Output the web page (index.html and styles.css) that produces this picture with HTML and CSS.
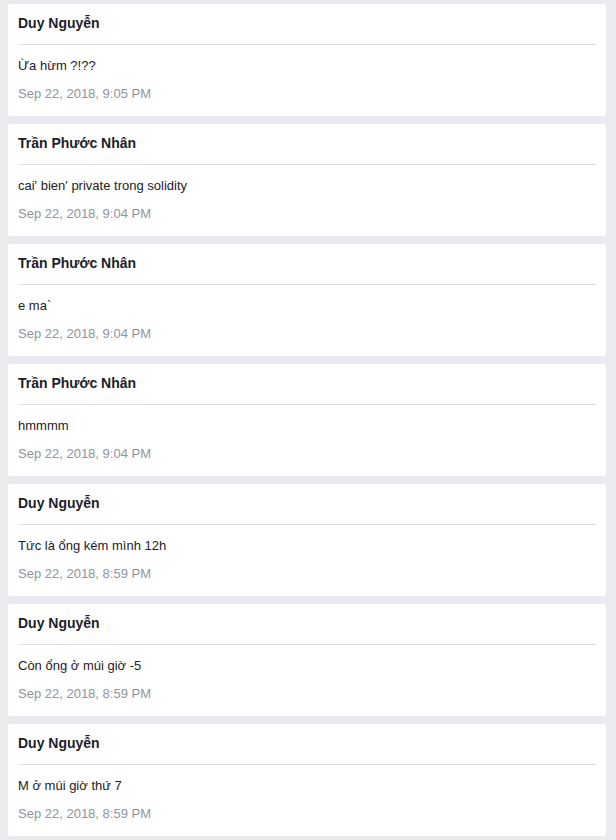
FILE: index.html
```html
<!DOCTYPE html>
<html>
<head>
<meta charset="utf-8">
<link rel="stylesheet" href="styles.css">
</head>
<body>
<div class="list">
  <div class="card">
    <div class="name">Duy Nguyễn</div>
    <div class="body">
      <div class="msg">Ừa hừm ?!??</div>
      <div class="date">Sep 22, 2018, 9:05 PM</div>
    </div>
  </div>
  <div class="card">
    <div class="name">Trần Phước Nhân</div>
    <div class="body">
      <div class="msg">cai' bien' private trong solidity</div>
      <div class="date">Sep 22, 2018, 9:04 PM</div>
    </div>
  </div>
  <div class="card">
    <div class="name">Trần Phước Nhân</div>
    <div class="body">
      <div class="msg">e ma`</div>
      <div class="date">Sep 22, 2018, 9:04 PM</div>
    </div>
  </div>
  <div class="card">
    <div class="name">Trần Phước Nhân</div>
    <div class="body">
      <div class="msg">hmmmm</div>
      <div class="date">Sep 22, 2018, 9:04 PM</div>
    </div>
  </div>
  <div class="card">
    <div class="name">Duy Nguyễn</div>
    <div class="body">
      <div class="msg">Tức là ổng kém mình 12h</div>
      <div class="date">Sep 22, 2018, 8:59 PM</div>
    </div>
  </div>
  <div class="card">
    <div class="name">Duy Nguyễn</div>
    <div class="body">
      <div class="msg">Còn ổng ở múi giờ -5</div>
      <div class="date">Sep 22, 2018, 8:59 PM</div>
    </div>
  </div>
  <div class="card">
    <div class="name">Duy Nguyễn</div>
    <div class="body">
      <div class="msg">M ở múi giờ thứ 7</div>
      <div class="date">Sep 22, 2018, 8:59 PM</div>
    </div>
  </div>
</div>
</body>
</html>
```

FILE: styles.css
```css
html, body {
  margin: 0;
  padding: 0;
  background: #e9ebee;
  font-family: "Liberation Sans", Arial, sans-serif;
  color: #1d2129;
}
.list {
  display: flex;
  flex-direction: column;
  gap: 8px;
  padding: 4px 10px 0 8px;
}
.card {
  background: #fff;
  border-radius: 3px;
  padding: 0 10px;
  height: 112px;
  box-sizing: border-box;
}
.name {
  font-size: 14px;
  font-weight: bold;
  line-height: 20px;
  padding: 9px 0 11px;
  border-bottom: 1px solid #dddfe2;
}
.body {
  padding: 12px 0 0;
}
.msg {
  font-size: 13px;
  line-height: 18px;
}
.date {
  margin-top: 10px;
  font-size: 13px;
  line-height: 18px;
  color: #90949c;
}
```
